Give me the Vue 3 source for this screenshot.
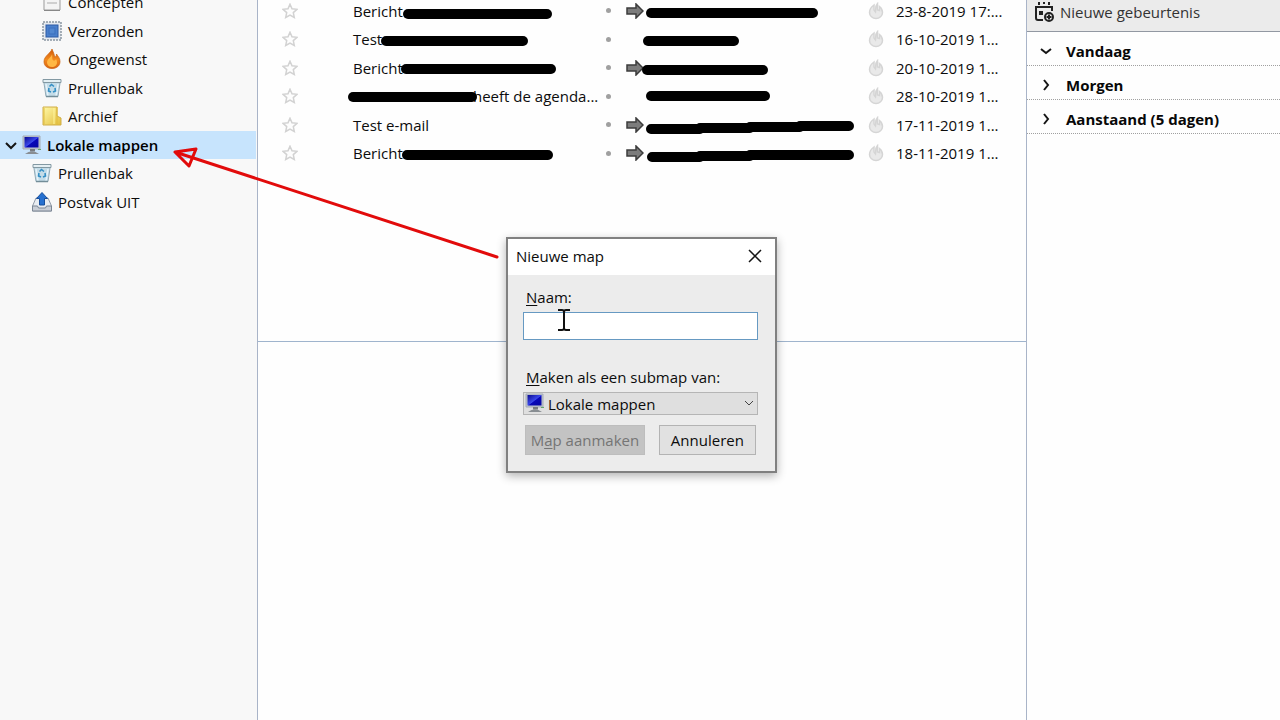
<script setup>
import { ref } from 'vue'

const folders = [
  { name: 'Concepten', icon: 'draft', level: 'child' },
  { name: 'Verzonden', icon: 'stamp', level: 'child' },
  { name: 'Ongewenst', icon: 'flame', level: 'child' },
  { name: 'Prullenbak', icon: 'bin', level: 'child' },
  { name: 'Archief', icon: 'folder', level: 'child' },
  { name: 'Lokale mappen', icon: 'computer', level: 'root' },
  { name: 'Prullenbak', icon: 'bin', level: 'sub' },
  { name: 'Postvak UIT', icon: 'outbox', level: 'sub' }
]

const messages = [
  { subject: 'Bericht', sent: true, date: '23-8-2019 17:...' },
  { subject: 'Test', sent: false, date: '16-10-2019 1...' },
  { subject: 'Bericht', sent: true, date: '20-10-2019 1...' },
  { subject: 'heeft de agenda...', hiddenStart: true, sent: false, date: '28-10-2019 1...' },
  { subject: 'Test e-mail', sent: true, date: '17-11-2019 1...' },
  { subject: 'Bericht', sent: true, date: '18-11-2019 1...' }
]

const strokes = [
  'M408 14H547', 'M386 41H523', 'M406 69H551', 'M353 97H472', 'M407 155H548',
  'M651 13H813', 'M648 41H734', 'M647 70H763', 'M651 96H765',
  'M651 129H700V128H750V127H800V126H849', 'M652 157H700V156H750V155H849'
]

const days = [
  { name: 'Vandaag', open: true },
  { name: 'Morgen', open: false },
  { name: 'Aanstaand (5 dagen)', open: false }
]

const folderName = ref('')
const parent = ref('Lokale mappen')
</script>

<template>
  <div class="app">
    <svg class="defs" aria-hidden="true">
      <defs>
        <linearGradient id="fire" x1="0" y1="0" x2="0" y2="1">
          <stop offset="0" stop-color="#cf5708" /><stop offset=".55" stop-color="#f38a1e" /><stop offset="1" stop-color="#d96410" />
        </linearGradient>
        <linearGradient id="screen" x1="0" y1="0" x2="1" y2="1">
          <stop offset="0" stop-color="#0a0a90" /><stop offset=".5" stop-color="#3a48ea" /><stop offset=".55" stop-color="#0808b8" /><stop offset="1" stop-color="#0606a0" />
        </linearGradient>
        <linearGradient id="manila" x1="0" y1="0" x2="1" y2="1">
          <stop offset="0" stop-color="#fff9a8" /><stop offset="1" stop-color="#e3bd3c" />
        </linearGradient>
        <symbol id="draft" viewBox="0 0 20 20">
          <path d="M2 1h16v17H2z" fill="#f4f4f4" stroke="#9b9b9b" />
          <path d="M5 7h10M5 11h10" stroke="#aaa" /><path d="M2 18.500h16" stroke="#888" />
        </symbol>
        <symbol id="stamp" viewBox="0 0 20 20">
          <rect x="1" y="1" width="18" height="18" fill="#e6eaef" stroke="#8b96a3" stroke-width="1.500" stroke-dasharray="2 1" />
          <rect x="4" y="4" width="12" height="12" fill="#4a80cc" stroke="#2c5ba5" />
          <rect x="7" y="7" width="6" height="6" fill="#5187d0" stroke="#3a6fbd" />
        </symbol>
        <symbol id="flame" viewBox="0 0 20 20">
          <path d="M10 0C9 4 2 7 2 12.500C2 17 5.500 19.500 10 19.500S18 17 18 12.500C18 9 16 7.500 14.500 5C14.500 7 13.500 8 12.500 8C12.500 5 11 3 10 0Z" fill="url(#fire)" stroke="#c9610f" stroke-width=".7" />
          <path d="M10 5C10 8 5 10 5 13.500C5 16 7 18 10 18S15 16 15 13.500C15 12 14.500 11 14 10C13 12 11 12 10.500 10.500C10 9 10.500 7 10 5Z" fill="#ffb743" />
        </symbol>
        <symbol id="bin" viewBox="0 0 20 20">
          <path d="M1.500 2h17L16 18.500H4Z" fill="#c3dce8" stroke="#93abb7" />
          <path d="M1 1.500h18v3H1z" fill="#e4eff3" stroke="#8399a3" />
          <path d="M4 6l2 12M16 6l-2 12" stroke="#e6f3fa" stroke-width="1.500" />
          <path d="M7.500 8.500l2-2 2.500 2M13 10l.5 3-2.500 1M9 14l-2.500-1 .5-3" fill="none" stroke="#348fc5" stroke-width="1.600" />
          <path d="M4 18.500h12" stroke="#738d98" stroke-width="1.500" />
        </symbol>
        <symbol id="folder" viewBox="0 0 20 20">
          <path d="M1 1h14v9l4 2v7H1z" fill="url(#manila)" stroke="#d0ae48" />
          <path d="M15 1v18M2 2v16" stroke="#e0bb3c" /><path d="M12 2v16" stroke="#fff6a0" />
        </symbol>
        <symbol id="computer" viewBox="0 0 20 20">
          <path d="M1 1h17v13H1z" fill="#bfc6cf" stroke="#a5acb6" />
          <path d="M2.500 2h14v10.500h-14z" fill="url(#screen)" />
          <path d="M8 14h5v2.500H8z" fill="#777b80" />
          <path d="M3 19Q10 13.500 17 19Z" fill="#888d92" /><path d="M16 14.500h3" stroke="#63a868" />
        </symbol>
        <symbol id="outbox" viewBox="0 0 20 20">
          <path d="M4 6h12l3.500 8v5H.5v-5Z" fill="#e8ecf1" stroke="#8f99a6" />
          <path d="M.5 14h5l1 2h7l1-2h5v5H.5Z" fill="#c9ced6" stroke="#7c8795" />
          <path d="M10 .5l5.500 6h-3V13h-5V6.500h-3Z" fill="#2670cf" stroke="#174f9d" />
        </symbol>
      </defs>
    </svg>

    <aside class="sidebar">
      <ul class="folders">
        <li v-for="(f, i) in folders" :key="i" :class="['folder', f.level]">
          <svg v-if="f.level === 'root'" class="twisty" viewBox="0 0 12 12"><path d="M1 4l5 5 5-5" /></svg>
          <svg class="folder-icon" viewBox="0 0 20 20"><use :href="'#' + f.icon" /></svg>
          <span>{{ f.name }}</span>
        </li>
      </ul>
    </aside>

    <main class="mail">
      <section class="list">
        <table class="messages">
          <colgroup>
            <col class="c-star"><col class="c-subject"><col class="c-dot"><col class="c-person"><col class="c-junk"><col>
          </colgroup>
          <tbody>
            <tr v-for="(m, i) in messages" :key="i">
              <td class="star-cell">
                <button class="plain" aria-label="Ster">
                  <svg class="star" viewBox="0 0 16 16"><path d="M8 1.200l2 4.500 5 .6-3.700 3.300 1 4.900L8 12l-4.300 2.500 1-4.900L1 6.300l5-.6z" /></svg>
                </button>
              </td>
              <td><span :class="{ shifted: m.hiddenStart }">{{ m.subject }}</span></td>
              <td><span class="dot"></span></td>
              <td>
                <svg v-if="m.sent" class="sent" viewBox="0 0 18 16"><path d="M1 5h9V1l7 7-7 7v-4H1z" /></svg>
              </td>
              <td>
                <button class="plain" aria-label="Ongewenst">
                  <svg class="junk" viewBox="0 0 16 18"><path d="M6 3C3 5 1.500 7 1.500 10.500c0 3.500 3 6 6.500 6s6.500-2.500 6.500-6c0-2.500-1-4.500-3-6v4l-2-.5V1.500C7 4 8 7 7.500 10L6 8z" /></svg>
                </button>
              </td>
              <td>{{ m.date }}</td>
            </tr>
          </tbody>
        </table>
      </section>
      <section class="preview"></section>
    </main>

    <aside class="agenda">
      <button class="new-event">
        <svg class="calendar" viewBox="0 0 20 22">
          <path d="M18 10V6M2 6v11q0 2 2 2h5M1 6h18M5 1v3M10 1v2M15 1v3" />
          <path d="M5 10h4v4H5z" class="solid" />
          <circle cx="15" cy="16" r="4" /><path d="M12.500 16h5M15 13.500v5" />
        </svg>
        <span>Nieuwe gebeurtenis</span>
      </button>
      <button v-for="d in days" :key="d.name" class="day" :aria-expanded="d.open">
        <svg class="twisty" viewBox="0 0 12 12"><path :d="d.open ? 'M1 4l5 4 5-4' : 'M4 1l4 5-4 5'" /></svg>
        <span>{{ d.name }}</span>
      </button>
    </aside>

    <svg class="annotations" viewBox="0 0 1280 720" aria-hidden="true">
      <path v-for="s in strokes" :key="s" :d="s" class="redaction" />
      <path d="M497 257L175 152M175 152L196 149L189 166Z" class="pointer" />
    </svg>

    <form class="dialog" role="dialog" aria-labelledby="dialog-title" @submit.prevent>
      <header class="titlebar">
        <span id="dialog-title">Nieuwe map</span>
        <button type="button" class="plain" aria-label="Sluiten">
          <svg class="close" viewBox="0 0 14 14"><path d="M1 1l12 12M13 1L1 13" /></svg>
        </button>
      </header>
      <div class="dialog-body">
        <label for="name"><u>N</u>aam:</label>
        <input id="name" v-model="folderName" type="text">
        <label for="parent" class="second"><u>M</u>aken als een submap van:</label>
        <div class="select-wrap">
          <svg class="select-icon" viewBox="0 0 20 20"><use href="#computer" /></svg>
          <select id="parent" v-model="parent"><option>Lokale mappen</option></select>
          <svg class="select-arrow" viewBox="0 0 10 6"><path d="M1 1l4 4 4-4" /></svg>
        </div>
        <div class="actions">
          <button type="submit" class="create" disabled>M<u>a</u>p aanmaken</button>
          <button type="button" class="cancel">Annuleren</button>
        </div>
      </div>
      <svg class="caret" viewBox="0 0 12 22" aria-hidden="true"><path d="M0 1h4q2 0 2 2q0-2 2-2h4M6 3v16M0 21h4q2 0 2-2q0 2 2 2h4" /></svg>
    </form>
  </div>
</template>

<style>
body { overflow: hidden; }
</style>

<style scoped>
.app {
  position: relative;
  display: grid;
  grid-template-columns: 258px 1fr 254px;
  min-height: 100vh;
  overflow: hidden;
  background: #fefefe;
  color: #0c0c0c;
  font-family: "Open Sans", "Noto Sans", sans-serif;
  font-size: 15px;
  line-height: 22px;
}
button, input, select { font: inherit; color: inherit; box-sizing: border-box; }
svg { display: block; flex: none; }
u { text-underline-offset: 2px; text-decoration-thickness: 1px; }
.defs { position: absolute; width: 0; height: 0; }
.plain { padding: 0; border: 0; background: none; display: block; }

.sidebar { background: #f8f8f8; border-right: 1px solid #a9b4c8; overflow: hidden; }
.folders { list-style: none; margin: -12px 1px 0 0; padding: 0; }
.folder { display: flex; align-items: center; box-sizing: border-box; height: 29px; gap: 6px; padding: 0 0 1px 42px; }
.folder:nth-child(even) { height: 28px; }
.folder.sub { padding-left: 32px; }
.folder.root { padding-left: 5px; gap: 5px; background: #c7e4fd; font-weight: 600; color: #000; }
.folder-icon { width: 20px; height: 20px; }
.twisty { width: 12px; height: 12px; fill: none; stroke: #151515; stroke-width: 2; }

.mail { display: grid; grid-template-rows: 341px 1fr; min-width: 0; }
.list { overflow: hidden; }
.preview { border-top: 1px solid #9fb4cd; }
.messages { width: 100%; margin-top: -4px; border-collapse: collapse; table-layout: fixed; }
.messages tr { height: 29px; }
.messages tr:nth-child(even) { height: 28px; }
.messages td { padding: 0; white-space: nowrap; vertical-align: middle; }
.c-star { width: 95px; }
.c-subject { width: 253px; }
.c-dot { width: 20px; }
.c-person { width: 242px; }
.c-junk { width: 28px; }
.messages .star-cell { padding-left: 24px; }
.star { width: 16px; height: 16px; fill: #fdfdfd; stroke: #d2d2d2; stroke-width: 1.5; }
.shifted { padding-left: 120px; }
.dot { display: block; width: 5px; height: 5px; border-radius: 50%; background: #a0a0a0; }
.sent { width: 18px; height: 16px; fill: #7c7c7c; stroke: #3c3c3c; stroke-width: 1.5; }
.junk { width: 16px; height: 18px; fill: #e9e9e9; stroke: #d5d5d5; stroke-width: 1.5; }

.agenda { border-left: 1px solid #a9b4c8; }
.new-event {
  display: flex; align-items: center; gap: 6px; width: 100%; height: 32px;
  padding: 0 0 7px 7px; border: 0; border-bottom: 1px solid #9298a2; background: #ebebeb; color: #333;
}
.calendar { width: 20px; height: 22px; fill: none; stroke: #222; stroke-width: 2; }
.calendar .solid { fill: #222; stroke: none; }
.day {
  display: flex; align-items: center; gap: 14px; width: 100%; height: 34px;
  padding: 4px 0 0 13px; border: 0; border-bottom: 1px dotted #a0a0a0; background: #fefefe;
  font-weight: 700; color: #080808;
}

.annotations { position: absolute; left: 0; top: 0; width: 1280px; height: 720px; pointer-events: none; fill: none; }
.redaction { stroke: #000; stroke-width: 10; stroke-linecap: round; stroke-linejoin: round; }
.pointer { stroke: #e20b0b; stroke-width: 3; stroke-linecap: round; stroke-linejoin: round; }

.dialog {
  position: absolute; left: 506px; top: 237px; width: 271px; box-sizing: border-box;
  border: 2px solid #808080; background: #ececec; box-shadow: 0 3px 9px rgba(0, 0, 0, .3);
}
.titlebar { display: flex; align-items: center; justify-content: space-between; box-sizing: border-box; height: 36px; padding: 0 13px 2px 8px; background: #fff; }
.close { width: 14px; height: 14px; fill: none; stroke: #151515; stroke-width: 1.5; }
.dialog-body { padding: 11px 17px 16px 15px; }
.dialog-body label { display: block; margin: 0 3px 4px; }
.dialog-body .second { margin: 26px 3px 4px; }
input { display: block; width: 100%; height: 28px; padding: 0 6px; border: 1px solid #6699c2; background: #fff; outline: 0; }
.select-wrap { position: relative; }
select {
  display: block; width: 100%; height: 23px; padding: 0 24px 0 24px; border: 1px solid #b5b5b5;
  border-radius: 0; background: #dfdfdf; appearance: none; line-height: 20px;
}
.select-icon { position: absolute; left: 2px; top: 1px; width: 20px; height: 20px; pointer-events: none; }
.select-arrow { position: absolute; right: 4px; top: 8px; width: 10px; height: 6px; fill: none; stroke: #444; pointer-events: none; }
.actions { display: flex; gap: 14px; margin: 10px 2px 0; }
.actions button { height: 30px; padding: 0; border: 1px solid #b3b3b3; background: #e1e1e1; white-space: nowrap; }
.actions .create { flex: 120; background: #c3c3c3; border-color: #bdbdbd; color: #757575; }
.actions .cancel { flex: 97; }
.caret { position: absolute; left: 50px; top: 70px; width: 12px; height: 22px; fill: none; stroke: #111; stroke-width: 2; pointer-events: none; }
</style>
